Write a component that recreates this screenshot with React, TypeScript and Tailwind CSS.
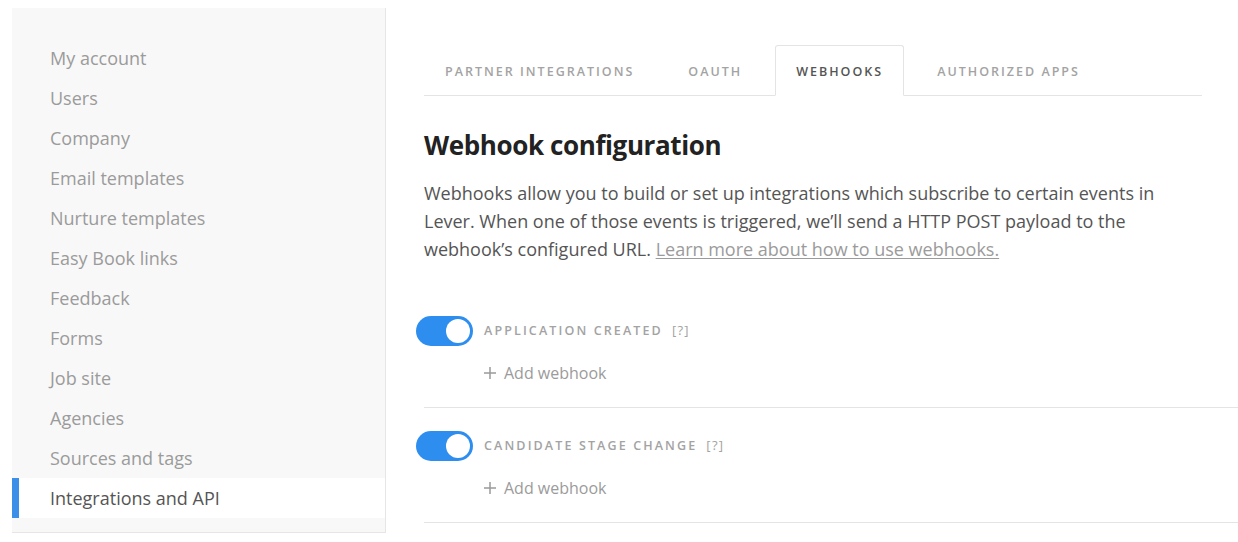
import React, { useState } from 'react'

const navItems = [
  'My account',
  'Users',
  'Company',
  'Email templates',
  'Nurture templates',
  'Easy Book links',
  'Feedback',
  'Forms',
  'Job site',
  'Agencies',
  'Sources and tags',
  'Integrations and API'
]

const tabs = ['Partner integrations', 'OAuth', 'Webhooks', 'Authorized apps']

const events = ['Application created', 'Candidate stage change']

const Toggle = ({ on, onClick }: { on: boolean; onClick: () => void }) => (
  <button
    type="button"
    onClick={onClick}
    className={`relative -ml-2 h-[30px] w-[57px] shrink-0 rounded-full ${on ? 'bg-[#2d8ef0]' : 'bg-[#d6d6d6]'}`}
  >
    <span
      className={`absolute top-[3px] h-[24px] w-[24px] rounded-full bg-white ${on ? 'right-[3px]' : 'left-[3px]'}`}
    />
  </button>
)

export default function App() {
  const [active] = useState('Integrations and API')
  const [tab, setTab] = useState('Webhooks')
  const [enabled, setEnabled] = useState<Record<string, boolean>>({
    'Application created': true,
    'Candidate stage change': true
  })

  return (
    <div
      className="flex min-h-[542px] bg-white pt-2"
      style={{ fontFamily: '"Open Sans", "Noto Sans", sans-serif' }}
    >
      {/* sidebar */}
      <div className="ml-3 h-[525px] w-[374px] shrink-0 border-r border-b border-[#e6e6e6] bg-[#f8f8f8] pt-[30px]">
        {navItems.map((item) => (
          <div
            key={item}
            className={`relative flex h-[40px] items-center pl-[38px] text-[18px] ${
              item === active ? 'bg-white text-[#555]' : 'text-[#9b9b9b]'
            }`}
          >
            {item === active && <span className="absolute left-0 top-0 h-full w-[7px] bg-[#3b8fe9]" />}
            {item}
          </div>
        ))}
      </div>

      {/* main */}
      <div className="flex-1 pl-[38px] pt-[37px]">
        <div className="flex w-[778px] border-b border-[#e4e4e4]">
          {tabs.map((t) => (
            <button
              key={t}
              type="button"
              onClick={() => setTab(t)}
              className={`-mb-px mr-[12px] flex h-[51px] items-center rounded-t-[3px] border px-5 pt-[4px] text-[12.5px] font-semibold uppercase tracking-[0.16em] ${
                tab === t
                  ? 'border-[#e4e4e4] border-b-white bg-white text-[#555]'
                  : 'border-transparent text-[#a3a3a3]'
              }`}
            >
              {t}
            </button>
          ))}
        </div>

        <h1 className="mt-[31px] text-[26px] font-bold leading-[36px] tracking-[-0.015em] text-[#222]">
          Webhook configuration
        </h1>
        <p className="mt-[16px] text-[18px] leading-[28px] text-[#555]">
          Webhooks allow you to build or set up integrations which subscribe to certain events in
          <br />
          Lever. When one of those events is triggered, we’ll send a HTTP POST payload to the
          <br />
          webhook’s configured URL.{' '}
          <a href="#" className="text-[#9b9b9b] underline underline-offset-2">
            Learn more about how to use webhooks.
          </a>
        </p>

        <div className="mt-[30px]">
          {events.map((ev) => (
            <div key={ev} className="flex h-[115px] flex-col border-b border-[#e4e4e4] pt-[23px]">
              <div className="flex items-center">
                <Toggle
                  on={enabled[ev]}
                  onClick={() => setEnabled({ ...enabled, [ev]: !enabled[ev] })}
                />
                <span className="ml-[11px] text-[12.5px] font-semibold uppercase tracking-[0.17em] text-[#a3a3a3]">
                  {ev}
                </span>
                <span className="ml-[9px] text-[13px] tracking-[0.1em] text-[#a3a3a3]">[?]</span>
              </div>
              <button
                type="button"
                className="ml-[60px] mt-[15px] flex w-fit items-center gap-[8px] text-[16px] text-[#9b9b9b]"
              >
                <svg width="12" height="12" viewBox="0 0 12 12" stroke="currentColor" strokeWidth="1.5">
                  <path d="M6 0v12M0 6h12" />
                </svg>
                Add webhook
              </button>
            </div>
          ))}
        </div>
      </div>
    </div>
  )
}
